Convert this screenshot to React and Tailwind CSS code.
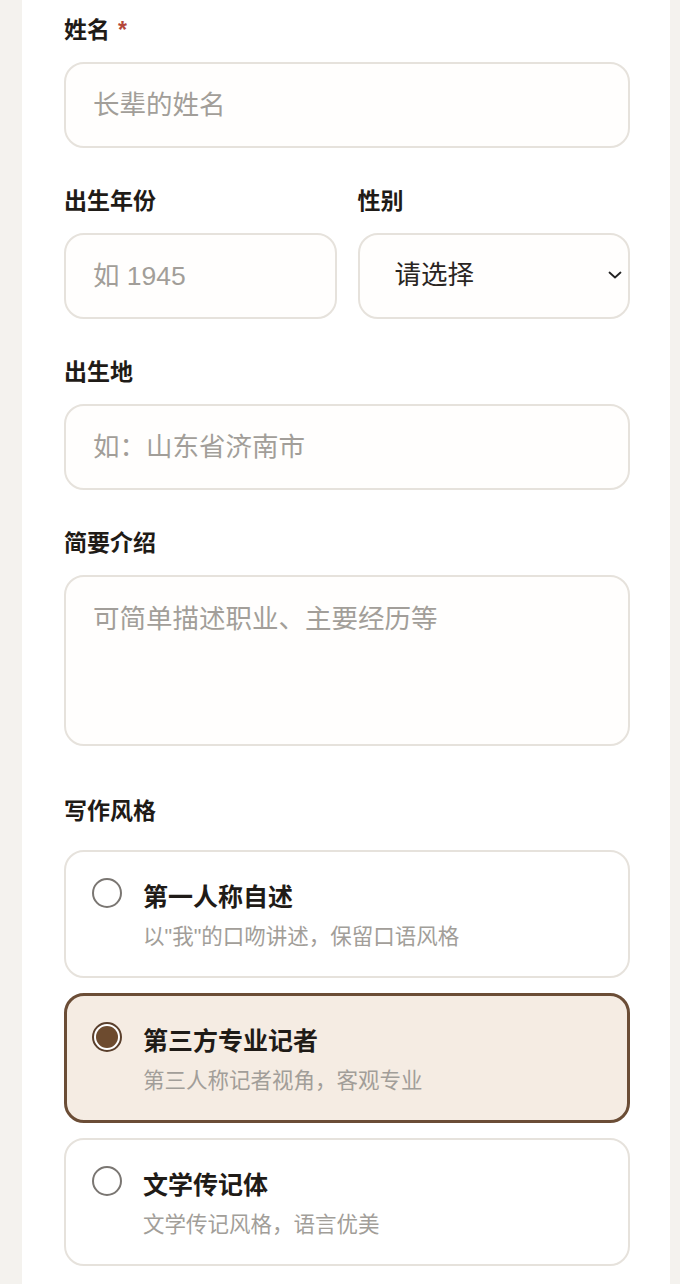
import React, { useState } from "react";

const font = { fontFamily: '"Liberation Sans", "Noto Sans CJK SC", "Noto Sans", sans-serif' };

function Label({ children, required }) {
  return (
    <div className="text-[23px] leading-[32px] font-bold text-[#1f1b17]">
      {children}
      {required && <span className="ml-[8px] text-[#b4473a]">*</span>}
    </div>
  );
}

const inputCls =
  "block w-full h-[86px] rounded-[20px] border-2 border-[#e6e2dc] bg-[#fffefd] px-[27px] text-[26.5px] text-[#2a2522] placeholder:text-[#a29e99] outline-none";

function Radio({ checked }) {
  return checked ? (
    <div className="mt-[-2px] w-[30px] h-[30px] rounded-full border-2 border-[#5a3f2c] flex items-center justify-center bg-white shrink-0">
      <div className="w-[22px] h-[22px] rounded-full bg-[#6d4b2f]" />
    </div>
  ) : (
    <div className="mt-[-2px] w-[30px] h-[30px] rounded-full border-2 border-[#7a7672] bg-white shrink-0" />
  );
}

function Option({ title, desc, checked, onClick }) {
  return (
    <div
      onClick={onClick}
      className={
        checked
          ? "rounded-[20px] border-[3px] border-[#6b4d36] bg-[#f5ece3] pl-[25px] pr-[25px] pt-[28px] pb-[24px] flex items-start gap-[21px] cursor-pointer"
          : "rounded-[20px] border-2 border-[#e6e2dc] bg-white pl-[26px] pr-[26px] pt-[28px] pb-[24px] flex items-start gap-[21px] cursor-pointer"
      }
    >
      <Radio checked={checked} />
      <div>
        <div className="h-[34px] text-[25px] leading-[34px] font-bold text-[#1f1b17]">{title}</div>
        <div className="mt-[8px] h-[30px] text-[21.5px] leading-[30px] text-[#a29e99]">{desc}</div>
      </div>
    </div>
  );
}

export default function App() {
  const [style, setStyle] = useState(1);
  const options = [
    { title: "第一人称自述", desc: '以"我"的口吻讲述，保留口语风格' },
    { title: "第三方专业记者", desc: "第三人称记者视角，客观专业" },
    { title: "文学传记体", desc: "文学传记风格，语言优美" },
  ];
  return (
    <div style={font} className="min-h-[1284px] bg-[#f4f2ee] pl-[22px] pr-[10px]">
      <div className="bg-white min-h-[1284px] pl-[42px] pr-[40px] pt-[14px] pb-[40px]">
        <Label required>姓名</Label>
        <div className="mt-[16px]">
          <input className={inputCls} placeholder="长辈的姓名" />
        </div>

        <div className="mt-[37px] flex gap-[21px]">
          <div className="flex-1">
            <Label>出生年份</Label>
            <div className="mt-[16px]">
              <input className={inputCls} placeholder="如 1945" />
            </div>
          </div>
          <div className="flex-1">
            <Label>性别</Label>
            <div className="mt-[16px] relative">
              <select className="block w-full h-[86px] appearance-none rounded-[20px] border-2 border-[#e6e2dc] bg-[#fffefd] pl-[35px] text-[26.5px] text-[#2a2522] outline-none">
                <option>请选择</option>
                <option>男</option>
                <option>女</option>
              </select>
              <svg
                className="absolute right-[7px] top-[37px] pointer-events-none"
                width="16"
                height="10"
                viewBox="0 0 16 10"
                fill="none"
              >
                <path d="M2.5 2.5 L8 7.5 L13.5 2.5" stroke="#222" strokeWidth="1.8" strokeLinecap="round" strokeLinejoin="round" />
              </svg>
            </div>
          </div>
        </div>

        <div className="mt-[37px]">
          <Label>出生地</Label>
          <div className="mt-[16px]">
            <input className={inputCls} placeholder="如：山东省济南市" />
          </div>
        </div>

        <div className="mt-[37px]">
          <Label>简要介绍</Label>
          <div className="mt-[16px]">
            <textarea
              className="block w-full h-[171px] resize-none rounded-[20px] border-2 border-[#e6e2dc] bg-[#fffefd] px-[27px] pt-[28px] text-[26.5px] leading-[28px] text-[#2a2522] placeholder:text-[#a29e99] outline-none"
              placeholder="可简单描述职业、主要经历等"
            />
          </div>
        </div>

        <div className="mt-[49px]">
          <Label>写作风格</Label>
          <div className="mt-[23px] flex flex-col gap-[15px]">
            {options.map((o, i) => (
              <Option key={i} title={o.title} desc={o.desc} checked={style === i} onClick={() => setStyle(i)} />
            ))}
          </div>
        </div>
      </div>
    </div>
  );
}
